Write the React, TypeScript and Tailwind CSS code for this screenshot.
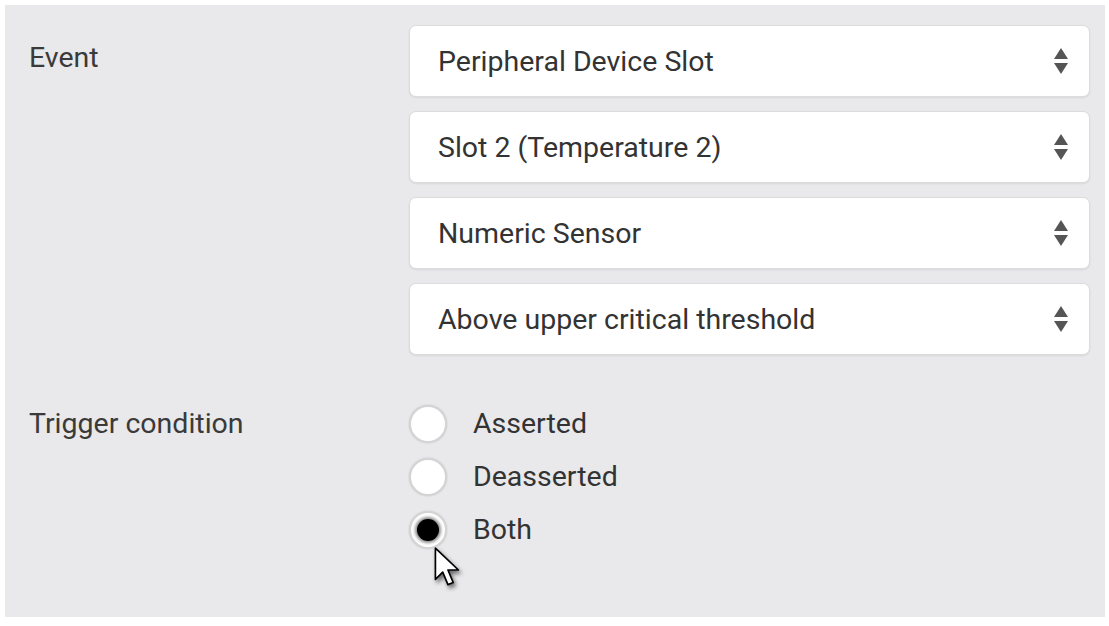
import React from "react";

const font = { fontFamily: "Roboto, 'Liberation Sans', sans-serif" };

function Arrows() {
  return (
    <svg width="16" height="28" viewBox="0 0 16 28" className="shrink-0">
      <path d="M8 1 L15 12 L1 12 Z" fill="#555" />
      <path d="M1 16 L15 16 L8 27 Z" fill="#555" />
    </svg>
  );
}

function Select({ value }: { value: string }) {
  return (
    <div className="h-[72px] bg-white rounded-[7px] border border-[#dcdcdc] shadow-[0_1px_2px_rgba(0,0,0,0.08)] flex items-center pl-[28px] pr-[20px] justify-between">
      <span className="text-[28.5px] text-[#333] tracking-[0px] mt-[2px]">{value}</span>
      <Arrows />
    </div>
  );
}

function Radio({ label, checked }: { label: string; checked?: boolean }) {
  return (
    <div className="h-[53px] flex items-center">
      <div className="w-[38px] h-[38px] rounded-full bg-white border-2 border-[#d4d4d4] flex items-center justify-center shadow-[0_0_2px_rgba(0,0,0,0.15)]">
        {checked && (
          <div className="w-[22px] h-[22px] rounded-full bg-black shadow-[0_0_3px_2px_rgba(0,0,0,0.45)]" />
        )}
      </div>
      <span className="ml-[26px] text-[28.5px] text-[#333] tracking-[0px] mt-[2px]">{label}</span>
    </div>
  );
}

export default function App() {
  return (
    <div className="w-[1109px] h-[626px] bg-white pt-[5px] pl-[5px] pr-[4px] pb-[9px]" style={font}>
      <div className="relative h-full bg-[#e9e8ea] pl-[24px] pr-[15px] pt-[20px]">
        <div className="flex">
          <div className="w-[380px] shrink-0 h-[72px] flex items-center -mt-[3px]">
            <span className="text-[28.5px] text-[#3a3a3a] tracking-[0px]">Event</span>
          </div>
          <div className="flex-1 flex flex-col gap-[14px]">
            <Select value="Peripheral Device Slot" />
            <Select value="Slot 2 (Temperature 2)" />
            <Select value="Numeric Sensor" />
            <Select value="Above upper critical threshold" />
          </div>
        </div>
        <div className="flex mt-[42px]">
          <div className="w-[380px] shrink-0 h-[53px] flex items-center">
            <span className="text-[28.5px] text-[#3a3a3a] tracking-[0px] mt-[2px]">Trigger condition</span>
          </div>
          <div className="flex flex-col">
            <Radio label="Asserted" />
            <Radio label="Deasserted" />
            <Radio label="Both" checked />
          </div>
        </div>
        <svg
          className="absolute left-[428px] top-[542px]"
          width="32"
          height="46"
          viewBox="0 0 30 44"
          style={{ filter: "drop-shadow(2px 3px 2px rgba(0,0,0,0.55))" }}
        >
          <path
            d="M2 1 L2 31 L9 24 L14 36 L19 34 L14 22 L24 22 Z"
            fill="#fff"
            stroke="#000"
            strokeWidth="1.6"
            strokeLinejoin="round"
          />
        </svg>
      </div>
    </div>
  );
}
